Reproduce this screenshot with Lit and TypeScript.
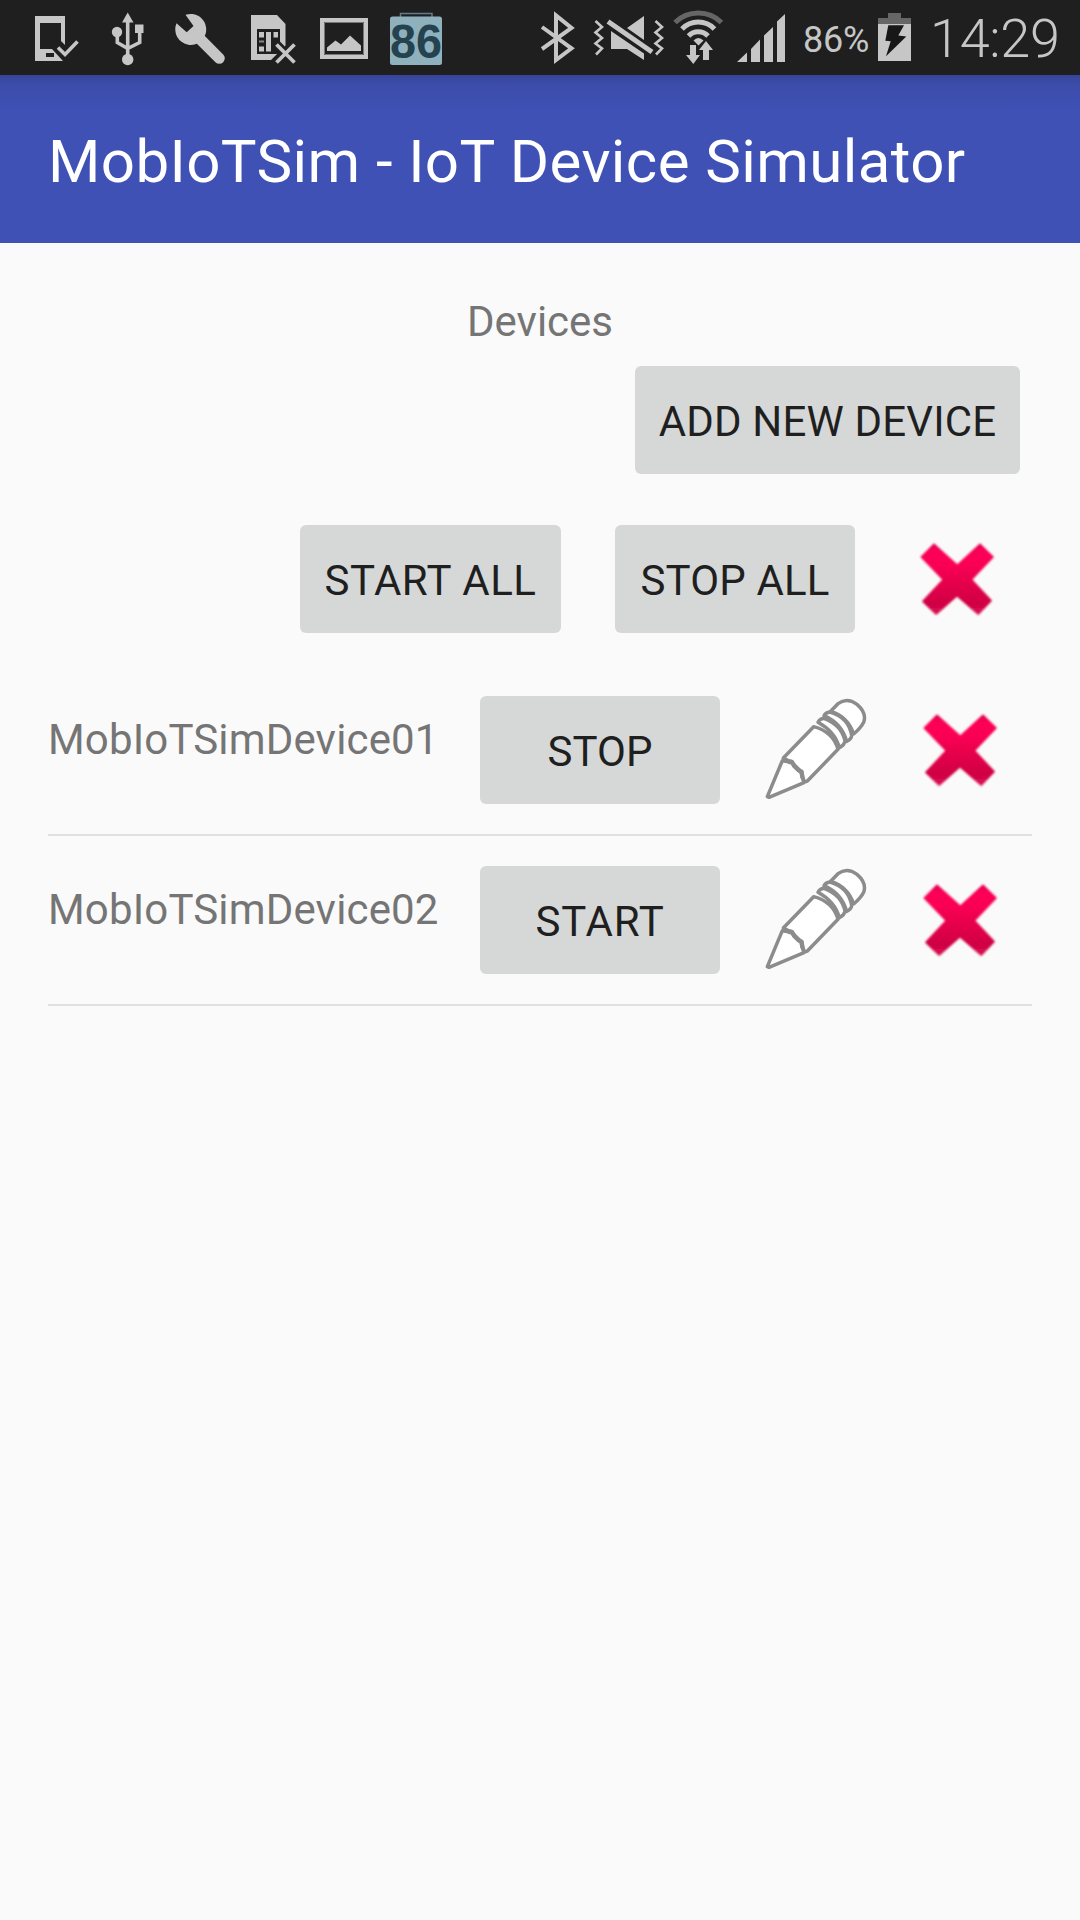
import { LitElement, html, css, svg } from "lit";
import { customElement, state } from "lit/decorators.js";

interface Device { name: string; running: boolean; }

@customElement("delete-icon")
class DeleteIcon extends LitElement {
  static styles = css`
    :host { display: block; width: 120px; height: 108px; }
    svg { display: block; }
  `;
  render() {
    return html`<svg width="120" height="108" viewBox="450 48 360 324">
      <defs>
        <linearGradient id="g" x1="0" y1="0" x2="0" y2="1">
          <stop offset="0" stop-color="#e00050"/><stop offset="0.1" stop-color="#fb0056"/><stop offset="0.3" stop-color="#fa0054"/>
          <stop offset="0.85" stop-color="#cf0043"/><stop offset="1" stop-color="#dc1056"/>
        </linearGradient>
        <filter id="soft"><feGaussianBlur stdDeviation="2.6"/></filter>
      </defs>
      <path d="M561 106 631 169 699 106 738 144 673 212 732 275 694 315 630 260 567 315 528 277 589 212 523 144Z"
        fill="url(#g)" stroke="url(#g)" stroke-width="5" stroke-linejoin="round" filter="url(#soft)"/>
    </svg>`;
  }
}

@customElement("edit-icon")
class EditIcon extends LitElement {
  static styles = css`
    :host { display: block; width: 150px; height: 108px; }
    svg { display: block; }
  `;
  render() {
    return html`<svg width="150" height="108" viewBox="0 48 450 324" fill="#fff" stroke="#8c8c8c" stroke-width="10.500" stroke-linejoin="round" stroke-linecap="round">
      <path d="M242 94 264 71Q291 51 321 73Q351 99 341 127Q332 145 311 162Q294 110 242 94Z"/>
      <path d="M222 107Q226 98 240 96Q296 112 305 166Q304 178 290 184Q275 130 222 107Z"/>
      <path d="M204 127Q208 117 222 115Q275 135 285 183Q284 194 268 203Q255 155 204 127Z"/>
      <path d="M100 234 191 140Q249 155 264 208L172 303Q167 306 163 304L152 274 124 246Z"/>
      <path d="M52 350 97 242 116 245 123 244 131 257 145 271 153 276 156 290 162 308 57 352Z"/>
      <path d="M118 246 126 246 133 258 146 271 155 275 157 290" fill="none" stroke-width="13"/>
    </svg>`;
  }
}

@customElement("status-bar")
class StatusBar extends LitElement {
  static styles = css`
    :host { display: flex; height: 75px; box-sizing: border-box; padding-left: 20px; background: #1f1f1f; color: #c6c6c6; font-family: Roboto, sans-serif; }
    svg { display: block; flex: none; height: 75px; }
    .gap { flex: none; width: 78px; }
    .battery { width: 75px; flex: none; font-size: 36px; line-height: 42px; padding-top: 19px; box-sizing: border-box; padding-left: 6px; white-space: nowrap; letter-spacing: -0.2px; }
    .clock { font-size: 54px; font-weight: 300; line-height: 64px; padding: 7px 0 0 8px; white-space: nowrap; letter-spacing: -0.3px; }
    .badge { font-family: "Liberation Sans", sans-serif; font-weight: 700; font-size: 49px; }
  `;
  private cell(x: number, w: number, body: unknown) {
    return html`<svg width=${w} height="75" viewBox="${x} 0 ${w} 75" fill="#c6c6c6">${body}</svg>`;
  }
  render() {
    return html`
      ${this.cell(20, 72, svg`
        <path fill-rule="evenodd" d="M35 16H65V45L61 41V23H40V49H52L63 61H35ZM46 53V57H54V53Z"/>
        <path d="M58 47.500 65 54.500 77.500 41.500" fill="none" stroke="#c6c6c6" stroke-width="3.600"/>`)}
      ${this.cell(92, 72, svg`
        <path d="M127.700 12.500 133.500 22.500H122Z"/><circle cx="127.700" cy="59.500" r="5.700"/><circle cx="117" cy="32" r="5.200"/>
        <path d="M135 24.500h8.500V33H135Z"/>
        <path d="M127.700 20V56M117.300 32V42.500L127.700 48.500 139.700 42.500V32" fill="none" stroke="#c6c6c6" stroke-width="3.600"/>`)}
      ${this.cell(164, 72, svg`
        <path d="M185.500 14.800A15.500 15.500 0 1 1 176.500 23.300L186.700 32.300 193.500 26Z"/>
        <path d="M199 38 219.300 58.300" stroke="#c6c6c6" stroke-width="11" stroke-linecap="round"/>`)}
      ${this.cell(236, 72, svg`
        <path d="M251 15H277L285.500 24V46L271 60H251Z"/>
        <path fill="#1f1f1f" d="M257 29H280V54H257Z"/>
        <path d="M259 32H264V37.500H259ZM259 46.500H264V51.500H259ZM266 32H271V51.500H266ZM273.500 32H278V37.500H273.500Z"/>
        <path fill="#8a8a8a" d="M259 40.500H264V42.500H259Z"/>
        <path d="M276 44 294 62M294 44 276 62" stroke="#1f1f1f" stroke-width="9"/>
        <path d="M276.500 44.500 294.500 62.500M294.500 44.500 276.500 62.500" stroke="#c6c6c6" stroke-width="3.800"/>`)}
      ${this.cell(308, 72, svg`
        <path fill-rule="evenodd" d="M320 18H368V59H320ZM324 22V55H364V22Z"/>
        <path d="M324.500 22.500h39v32h-39Z" fill="none" stroke="#777" stroke-width="1"/>
        <path d="M327 51V47.500L335.500 40.500 341 44.500 350 35.500 361 45.500V51Z"/>`)}
      ${this.cell(380, 72, svg`
        <path d="M400.500 18V13.500H432V18" fill="none" stroke="#5f7f8a" stroke-width="1.500"/>
        <rect x="390" y="16.500" width="52" height="48.500" rx="2.500" fill="#8fb1be"/>
        <text class="badge" x="390" y="58" textLength="52" lengthAdjust="spacingAndGlyphs" fill="#24434f">86</text>`)}
      <div class="gap"></div>
      ${this.cell(530, 55, svg`
        <path d="M542 27 571.500 48.300 556 60V15.500L571.500 28 542 49" fill="none" stroke="#c6c6c6" stroke-width="4"/>`)}
      ${this.cell(585, 83, svg`
        <path d="M595.500 21 602 27 595.500 32.500 602 38 595.500 43.500 602 48.500 596 54.500M655.500 21 662 27 655.500 32.500 662 38 655.500 43.500 662 48.500 656 54.500" fill="none" stroke="#c6c6c6" stroke-width="2.600"/>
        <path d="M627 28 644 16V40ZM611 31V49H627L644 60V53.500Z"/>
        <path d="M608 21.500 652 52" stroke="#c6c6c6" stroke-width="5"/>`)}
      ${this.cell(668, 60, svg`
        <g fill="none" stroke="#c6c6c6" stroke-width="5">
        <path stroke="#666" d="M675 22.500A33.300 33.300 0 0 1 721.500 22.500"/>
        <path d="M682 29A22.500 22.500 0 0 1 714.500 29"/><path d="M688.500 36A13.500 13.500 0 0 1 708 36"/></g>
        <path d="M693.500 40.500Q698.300 35.500 703.500 40.500L698.500 45.500Z"/>
        <path d="M690 45H696V55H700L693.300 64 686 55H690ZM703 60V50H699L706 41 713 50H709V60Z"/>`)}
      ${this.cell(728, 69, svg`
        <path d="M737 62 747 52.500V62ZM751 62V49L760 39.500V62ZM764 62V35.500L773 27V62ZM777 62V21.500L785 14V62Z"/>`)}
      <div class="battery">86%</div>
      ${this.cell(872, 50, svg`
        <path fill="#666" d="M888 13H901V18H911V24H878V18H888Z"/><path d="M878 24H911V61H878Z"/>
        <path fill="#171717" d="M888.300 25.300H904L898.300 35.500 906.300 36.500 886 56.300 890.700 41.300 885.300 40.700Z"/>`)}
      <div class="clock">14:29</div>`;
  }
}

@customElement("app-root")
class AppRoot extends LitElement {
  static styles = css`
    :host { display: flex; flex-direction: column; height: 1920px; background: #fafafa; font-family: Roboto, sans-serif; font-size: 42px; line-height: 49px; color: #757575; }
    .appbar { height: 168px; box-sizing: border-box; display: flex; align-items: center; padding: 5px 0 0 48px; color: #fff; font-size: 60px; line-height: 70px; letter-spacing: 0.4px; white-space: nowrap;
      background: linear-gradient(#37459a, #3c4dac 12px, #3f51b5 38px); }
    main { padding: 54px 48px 0; display: flex; flex-direction: column; }
    .heading { text-align: center; margin-bottom: 20px; }
    .right { display: flex; justify-content: flex-end; padding-right: 12px; }
    .bulk { margin: 51px 0 33px; padding-right: 15px; }
    .btn { flex: none; height: 108px; border: 0; border-radius: 6px; padding: 2px 0 0; background: #d6d8d7; color: #1f1f1f; font: inherit; white-space: nowrap; }
    .add { width: 385px; letter-spacing: 0.16px; }
    .start-all { width: 261px; margin-right: 54px; letter-spacing: 0.5px; }
    .stop-all { width: 240px; margin-right: 42px; letter-spacing: 0.15px; }
    .row { display: flex; padding: 30px 0; border-bottom: 2px solid #e1e1e1; }
    .name { width: 432px; flex: none; padding-top: 19px; box-sizing: border-box; letter-spacing: 0.16px; }
    .toggle { width: 240px; margin-right: 30px; }
    .idle { letter-spacing: 0.8px; }
  `;
  @state() private devices: Device[] = [
    { name: "MobIoTSimDevice01", running: true },
    { name: "MobIoTSimDevice02", running: false },
  ];
  private toggle(i: number) {
    this.devices = this.devices.map((d, n) => (n === i ? { ...d, running: !d.running } : d));
  }
  render() {
    return html`
      <status-bar></status-bar>
      <header class="appbar"><span>MobIoTSim - IoT Device Simulator</span></header>
      <main>
        <div class="heading">Devices</div>
        <div class="right"><button class="btn add">ADD NEW DEVICE</button></div>
        <div class="right bulk">
          <button class="btn start-all">START ALL</button>
          <button class="btn stop-all">STOP ALL</button>
          <delete-icon></delete-icon>
        </div>
        ${this.devices.map((d, i) => html`<div class="row">
          <div class="name">${d.name}</div>
          <button class="btn toggle ${d.running ? "" : "idle"}" @click=${() => this.toggle(i)}>${d.running ? "STOP" : "START"}</button>
          <edit-icon></edit-icon><delete-icon></delete-icon>
        </div>`)}
      </main>`;
  }
}
